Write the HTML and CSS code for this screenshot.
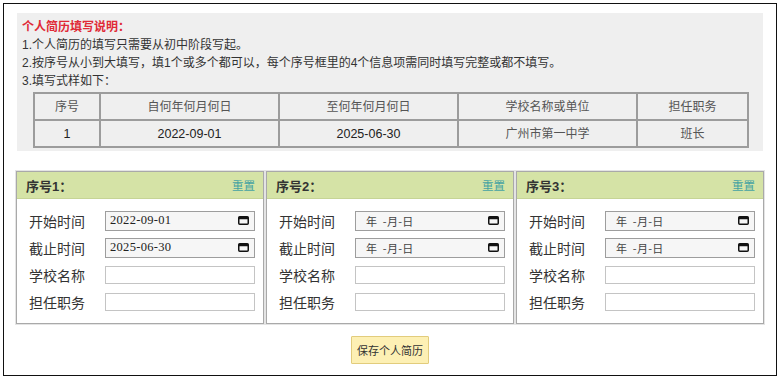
FILE: index.html
```html
<!DOCTYPE html>
<html lang="zh-CN">
<head>
    <meta charset="UTF-8">
    <meta name="viewport" content="width=device-width, initial-scale=1.0">
    <title>个人简历</title>
    <link rel="stylesheet" href="styles.css">
</head>
<body>
    <div class="frame">
        <div class="notice">
            <div class="notice-title">个人简历填写说明：</div>
            <div class="notice-line">1.个人简历的填写只需要从初中阶段写起。</div>
            <div class="notice-line">2.按序号从小到大填写，填1个或多个都可以，每个序号框里的4个信息项需同时填写完整或都不填写。</div>
            <div class="notice-line">3.填写式样如下：</div>
            <table class="sample">
                <colgroup>
                    <col class="c-no">
                    <col class="c-date">
                    <col class="c-date">
                    <col class="c-date">
                    <col class="c-job">
                </colgroup>
                <tr>
                    <th>序号</th>
                    <th>自何年何月何日</th>
                    <th>至何年何月何日</th>
                    <th>学校名称或单位</th>
                    <th>担任职务</th>
                </tr>
                <tr>
                    <td class="num">1</td>
                    <td class="num">2022-09-01</td>
                    <td class="num">2025-06-30</td>
                    <td>广州市第一中学</td>
                    <td>班长</td>
                </tr>
            </table>
        </div>

        <div class="panels">
            <div class="panel">
                <div class="panel-head">
                    <span class="panel-title">序号<b>1</b>：</span>
                    <a class="reset" href="#">重置</a>
                </div>
                <div class="panel-body">
                    <div class="field">
                        <span class="label">开始时间</span>
                        <span class="date-input"><span class="date-text">2022-09-01</span><svg class="cal" width="11" height="9" viewBox="0 0 11 9"><rect x="0.75" y="0.75" width="9.5" height="7.5" rx="1" fill="none" stroke="#111" stroke-width="1.5"/><rect x="0.75" y="0.75" width="9.5" height="2.5" fill="#111"/></svg></span>
                    </div>
                    <div class="field">
                        <span class="label">截止时间</span>
                        <span class="date-input"><span class="date-text">2025-06-30</span><svg class="cal" width="11" height="9" viewBox="0 0 11 9"><rect x="0.75" y="0.75" width="9.5" height="7.5" rx="1" fill="none" stroke="#111" stroke-width="1.5"/><rect x="0.75" y="0.75" width="9.5" height="2.5" fill="#111"/></svg></span>
                    </div>
                    <div class="field">
                        <span class="label">学校名称</span>
                        <input class="text-input" type="text">
                    </div>
                    <div class="field">
                        <span class="label">担任职务</span>
                        <input class="text-input" type="text">
                    </div>
                </div>
            </div>

            <div class="panel">
                <div class="panel-head">
                    <span class="panel-title">序号<b>2</b>：</span>
                    <a class="reset" href="#">重置</a>
                </div>
                <div class="panel-body">
                    <div class="field">
                        <span class="label">开始时间</span>
                        <span class="date-input"><span class="date-text empty">年&nbsp;&nbsp;-月-日</span><svg class="cal" width="11" height="9" viewBox="0 0 11 9"><rect x="0.75" y="0.75" width="9.5" height="7.5" rx="1" fill="none" stroke="#111" stroke-width="1.5"/><rect x="0.75" y="0.75" width="9.5" height="2.5" fill="#111"/></svg></span>
                    </div>
                    <div class="field">
                        <span class="label">截止时间</span>
                        <span class="date-input"><span class="date-text empty">年&nbsp;&nbsp;-月-日</span><svg class="cal" width="11" height="9" viewBox="0 0 11 9"><rect x="0.75" y="0.75" width="9.5" height="7.5" rx="1" fill="none" stroke="#111" stroke-width="1.5"/><rect x="0.75" y="0.75" width="9.5" height="2.5" fill="#111"/></svg></span>
                    </div>
                    <div class="field">
                        <span class="label">学校名称</span>
                        <input class="text-input" type="text">
                    </div>
                    <div class="field">
                        <span class="label">担任职务</span>
                        <input class="text-input" type="text">
                    </div>
                </div>
            </div>

            <div class="panel">
                <div class="panel-head">
                    <span class="panel-title">序号<b>3</b>：</span>
                    <a class="reset" href="#">重置</a>
                </div>
                <div class="panel-body">
                    <div class="field">
                        <span class="label">开始时间</span>
                        <span class="date-input"><span class="date-text empty">年&nbsp;&nbsp;-月-日</span><svg class="cal" width="11" height="9" viewBox="0 0 11 9"><rect x="0.75" y="0.75" width="9.5" height="7.5" rx="1" fill="none" stroke="#111" stroke-width="1.5"/><rect x="0.75" y="0.75" width="9.5" height="2.5" fill="#111"/></svg></span>
                    </div>
                    <div class="field">
                        <span class="label">截止时间</span>
                        <span class="date-input"><span class="date-text empty">年&nbsp;&nbsp;-月-日</span><svg class="cal" width="11" height="9" viewBox="0 0 11 9"><rect x="0.75" y="0.75" width="9.5" height="7.5" rx="1" fill="none" stroke="#111" stroke-width="1.5"/><rect x="0.75" y="0.75" width="9.5" height="2.5" fill="#111"/></svg></span>
                    </div>
                    <div class="field">
                        <span class="label">学校名称</span>
                        <input class="text-input" type="text">
                    </div>
                    <div class="field">
                        <span class="label">担任职务</span>
                        <input class="text-input" type="text">
                    </div>
                </div>
            </div>
        </div>

        <div class="actions">
            <button class="save" type="button">保存个人简历</button>
        </div>
    </div>
</body>
</html>
```

FILE: styles.css
```css
body {
    margin: 0;
    font-family: "Liberation Sans", "Noto Sans CJK SC", sans-serif;
    color: #333;
    background: #fff;
}

.frame {
    margin: 3px 5px 0 3px;
    border: 1px solid #111;
    padding: 9px 13px 11px 13px;
}

.notice {
    background: #efefef;
    padding: 5px 15px 3px 5px;
    font-size: 12px;
    line-height: 18px;
    color: #333;
}

.notice-title {
    color: #e02a36;
    font-weight: bold;
}

.sample {
    margin: 2px 0 0 11px;
    width: 715px;
    border-collapse: collapse;
    table-layout: fixed;
    font-size: 12px;
}

.c-no { width: 66px; }
.c-date { width: 179px; }
.c-job { width: 111px; }

.sample th,
.sample td {
    border: 2px solid #9c9c9c;
    height: 25px;
    padding: 0;
    text-align: center;
    font-weight: normal;
    color: #555;
}

.sample td.num {
    color: #222;
    font-size: 12.5px;
}

.panels {
    display: grid;
    grid-template-columns: repeat(3, minmax(0, 1fr));
    gap: 2px;
    margin: 20px -1px 0 -1px;
}

.panel {
    min-width: 0;
    border: 1px solid #a9a9a9;
    box-shadow: 0 0 0 1px #e4e4e4;
}

.panel-head {
    display: flex;
    justify-content: space-between;
    align-items: center;
    height: 26px;
    padding: 0 8px 0 9px;
    background: #d5e3a6;
    border-bottom: 1px solid #c6d496;
}

.panel-title {
    font-size: 13px;
    font-weight: bold;
    color: #333;
}

.reset {
    font-size: 11.5px;
    color: #45a3a3;
    text-decoration: none;
}

.panel-body {
    padding: 8px 8px 8px 12px;
}

.field {
    display: flex;
    align-items: center;
    height: 27px;
}

.label {
    width: 76px;
    flex: none;
    font-size: 14px;
    color: #333;
}

.date-input {
    flex: 1;
    min-width: 0;
    display: flex;
    align-items: center;
    justify-content: space-between;
    height: 20px;
    box-sizing: border-box;
    border: 1px solid #9d9d9d;
    background: #f6f6f6;
    padding: 0 5px 0 4px;
}

.date-text {
    font-family: "Liberation Serif", "Noto Sans CJK SC", serif;
    font-size: 12.5px;
    color: #222;
    letter-spacing: 0.3px;
}

.date-text.empty {
    padding-left: 6px;
    font-family: "Noto Sans CJK SC", sans-serif;
    font-size: 11px;
    color: #444;
}

.cal {
    display: block;
}

.text-input {
    flex: 1;
    min-width: 0;
    width: 0;
    height: 18px;
    box-sizing: border-box;
    margin: 0;
    border: 1px solid #c4c4c4;
    background: #fff;
}

.actions {
    display: flex;
    justify-content: center;
    margin-top: 12px;
}

.save {
    height: 28px;
    padding: 0 5px;
    border: 1px solid #e2cc7c;
    background: #fdf0b4;
    font-family: "Noto Sans CJK SC", sans-serif;
    font-size: 11px;
    color: #333;
    border-radius: 1px;
}
```
